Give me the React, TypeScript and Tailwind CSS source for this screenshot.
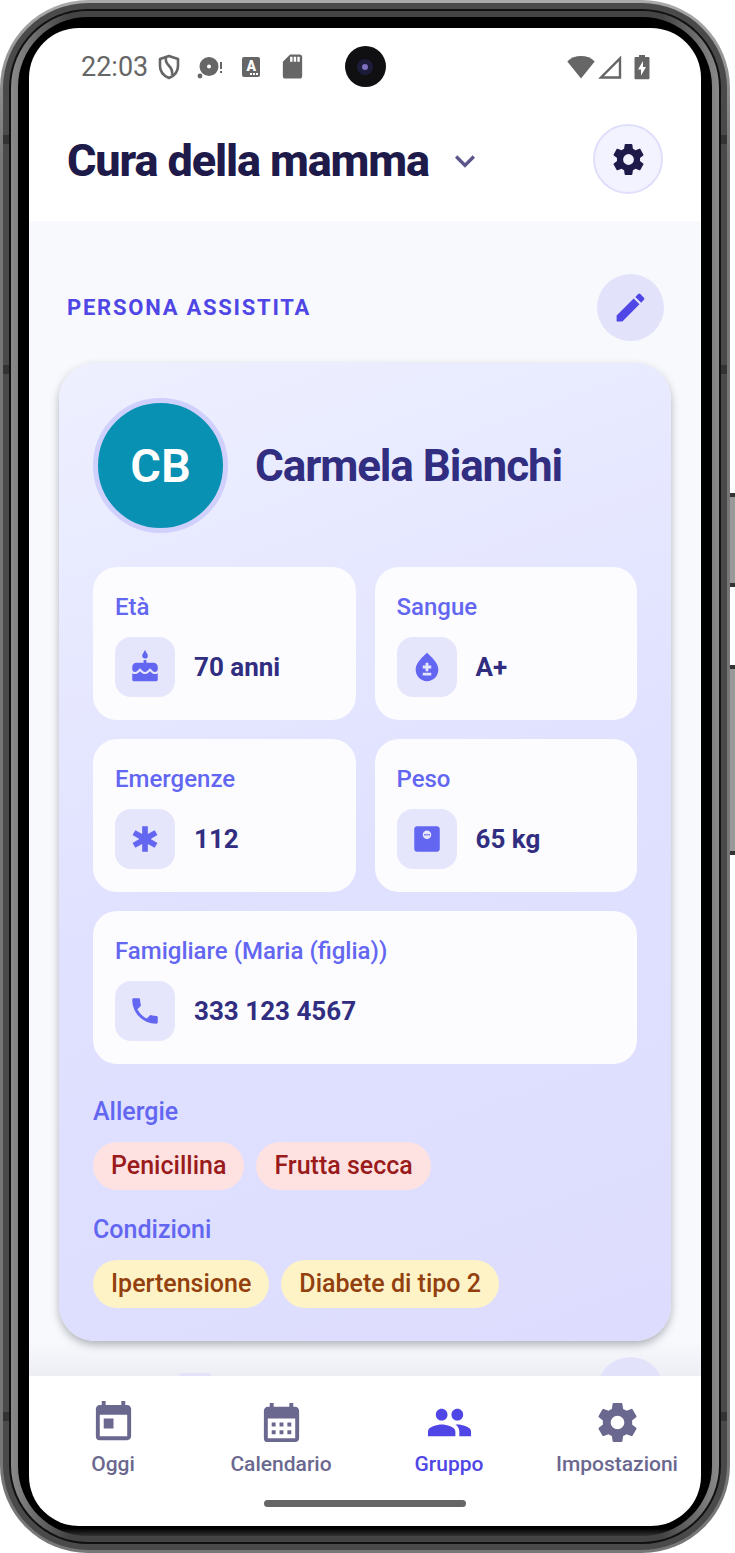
import type { ReactNode } from 'react'
import type { IconType } from 'react-icons'
import {
  MdBloodtype,
  MdCake,
  MdCalendarMonth,
  MdEdit,
  MdEmergency,
  MdKeyboardArrowDown,
  MdMonitorWeight,
  MdPeople,
  MdPhone,
  MdSdCard,
  MdToday,
} from 'react-icons/md'

type Fact = { label: string; value: string; icon: IconType; wide?: boolean }

const facts: Fact[] = [
  { label: 'Età', value: '70 anni', icon: MdCake },
  { label: 'Sangue', value: 'A+', icon: MdBloodtype },
  { label: 'Emergenze', value: '112', icon: MdEmergency },
  { label: 'Peso', value: '65 kg', icon: MdMonitorWeight },
  { label: 'Famigliare (Maria (figlia))', value: '333 123 4567', icon: MdPhone, wide: true },
]

function CogIcon({ className }: { className?: string }) {
  return (
    <svg className={className} viewBox="0 0 24 24" fill="currentColor" aria-hidden="true">
      <path d="M12 15.5A3.5 3.5 0 0 1 8.5 12 3.5 3.5 0 0 1 12 8.500 3.5 3.5 0 0 1 15.5 12 3.5 3.5 0 0 1 12 15.500M19.430 12.970C19.470 12.650 19.500 12.330 19.500 12S19.470 11.340 19.430 11L21.540 9.370C21.730 9.220 21.780 8.950 21.660 8.730L19.660 5.270C19.540 5.050 19.270 4.960 19.050 5.050L16.560 6.050C16.040 5.660 15.500 5.320 14.870 5.070L14.500 2.420C14.460 2.180 14.250 2 14 2H10C9.750 2 9.540 2.180 9.500 2.420L9.130 5.070C8.500 5.320 7.960 5.660 7.440 6.050L4.950 5.050C4.730 4.960 4.460 5.050 4.340 5.270L2.340 8.730C2.210 8.950 2.270 9.220 2.460 9.370L4.570 11C4.530 11.340 4.500 11.670 4.500 12S4.530 12.650 4.570 12.970L2.460 14.630C2.270 14.780 2.210 15.050 2.340 15.270L4.340 18.730C4.460 18.950 4.730 19.030 4.950 18.950L7.440 17.940C7.960 18.340 8.500 18.680 9.130 18.930L9.500 21.580C9.540 21.820 9.750 22 10 22H14C14.250 22 14.460 21.820 14.500 21.580L14.870 18.930C15.500 18.670 16.040 18.340 16.560 17.940L19.050 18.950C19.270 19.030 19.540 18.950 19.660 18.730L21.660 15.270C21.780 15.050 21.730 14.780 21.540 14.630Z" />
    </svg>
  )
}

const tabs = [
  { label: 'Oggi', icon: MdToday },
  { label: 'Calendario', icon: MdCalendarMonth },
  { label: 'Gruppo', icon: MdPeople, active: true },
  { label: 'Impostazioni', icon: CogIcon },
]

const allergies = ['Penicillina', 'Frutta secca']
const conditions = ['Ipertensione', 'Diabete di tipo 2']

function StatusBar() {
  return (
    <div className="relative flex h-20 items-center justify-between pr-[51px] pb-[3px] pl-[52px] text-[#666]">
      <div className="flex items-center">
        <span className="text-[27px] leading-8">22:03</span>
        <svg className="ml-2.5 h-[26px] w-[22px]" viewBox="0 0 22 26" fill="none" stroke="currentColor" strokeWidth="2.6" aria-hidden="true">
          <path d="M11 2 L20 5 V12 C20 18 16 22 11 24 C6 22 2 18 2 12 V5 Z" strokeLinejoin="round" />
          <path d="M8 4 C6 12 16 11 14 21" />
        </svg>
        <svg className="ml-[17px] h-[24px] w-[26px]" viewBox="0 0 26 24" fill="currentColor" aria-hidden="true">
          <path fillRule="evenodd" d="M12 2a9.500 9.500 0 1 0 0 19a9.500 9.500 0 1 0 0-19zM12 9.500a2 2 0 1 1 0 4a2 2 0 1 1 0-4z" />
          <circle cx="3" cy="21" r="2.400" />
          <path d="M23 7h2v7h-2zM23 16h2v2h-2z" />
        </svg>
        <span className="relative ml-[19px] flex h-5 w-[18px] justify-center rounded-xs bg-[#666] text-[14px] leading-[18px] font-black text-white">
          A
          <span className="absolute right-0.5 bottom-0.5 w-2 border-b-2 border-dotted border-white" />
        </span>
        <MdSdCard className="ml-[18px] size-[29px]" aria-hidden="true" />
      </div>

      <div className="absolute inset-x-0 top-[18px] flex justify-center">
        <div className="flex size-[41px] items-center justify-center rounded-full bg-[#101012]">
          <div className="flex size-4 items-center justify-center rounded-full bg-[#1c1b3a]">
            <div className="size-1.5 rounded-full bg-[#7f6fc0]" />
          </div>
        </div>
      </div>

      <div className="flex items-center" aria-hidden="true">
        <svg className="h-6 w-7" viewBox="0 0 28 24" fill="currentColor">
          <path d="M14 23.500 L0.300 6.500 C7 -0.800 21 -0.800 27.700 6.500 Z" />
        </svg>
        <svg className="ml-[3px] h-6 w-6" viewBox="0 0 24 24" fill="none" stroke="currentColor" strokeWidth="2.400">
          <path d="M3 22.500 H22 V3.500 Z" />
        </svg>
        <svg className="ml-3 h-[26px] w-4" viewBox="0 0 16 26" fill="currentColor">
          <path fillRule="evenodd" d="M5 1h6v2h3.500q1 0 1 1v20q0 1.200-1 1.200h-13q-1 0-1-1.200v-20q0-1 1-1H5zM9 7L4 15.500h3V21.500l5-8.500H9z" />
        </svg>
      </div>
    </div>
  )
}

function Header() {
  return (
    <header className="flex h-[113px] items-start justify-between px-[38px] pt-4">
      <button type="button" className="flex items-center gap-4 pt-[11px] text-[#1e1b4b]">
        <h1 className="text-[45px] leading-[52px] font-extrabold tracking-tight">Cura della mamma</h1>
        <MdKeyboardArrowDown className="size-10 text-[#5b568c]" aria-hidden="true" />
      </button>
      <button
        type="button"
        aria-label="Impostazioni del gruppo"
        className="flex size-[70px] items-center justify-center rounded-full border-2 border-[#e0dffb] bg-[#f3f3ff] text-[#1e1b4b]"
      >
        <CogIcon className="size-[37px]" />
      </button>
    </header>
  )
}

function FactTile({ label, value, icon: Icon, wide }: Fact) {
  return (
    <div className={`rounded-3xl bg-[#fcfcff] px-[22px] pt-6 pb-[23px] ${wide ? 'col-span-2' : ''}`}>
      <dt className="text-[24px] leading-8 font-medium text-[#6366f1]">{label}</dt>
      <dd className="mt-[14px] flex items-center gap-[19px] text-[26px] leading-8 font-bold text-[#312e81]">
        <span className="flex size-[60px] items-center justify-center rounded-2xl bg-[#e5e5fc] text-[#6366f1]">
          <Icon className="size-[34px]" aria-hidden="true" />
        </span>
        {value}
      </dd>
    </div>
  )
}

function ChipGroup({ title, children }: { title: string; children: ReactNode }) {
  return (
    <section>
      <h3 className="text-[25px] leading-8 font-medium text-[#6366f1]">{title}</h3>
      <ul className="mt-[14px] flex flex-wrap gap-3">{children}</ul>
    </section>
  )
}

function PersonCard() {
  return (
    <article className="mx-[30px] mt-[22px] rounded-[36px] bg-linear-160 from-[#eef0ff] via-[#e0e1ff] to-[#dddcfe] px-[34px] pt-[35px] pb-[33px] shadow-[0_4px_8px_rgba(40,50,60,0.35)]">
      <div className="flex items-center gap-[27px]">
        <div className="flex size-[135px] shrink-0 items-center justify-center rounded-full border-[5px] border-[#d0d0fc] bg-[#0891b2] text-[47px] leading-[52px] font-semibold text-white">
          CB
        </div>
        <h2 className="text-[44px] leading-[52px] font-bold tracking-tight text-[#312e81]">Carmela Bianchi</h2>
      </div>

      <dl className="mt-[34px] grid grid-cols-2 gap-[19px]">
        {facts.map(fact => (
          <FactTile key={fact.label} {...fact} />
        ))}
      </dl>

      <div className="mt-8 flex flex-col gap-6">
        <ChipGroup title="Allergie">
          {allergies.map(name => (
            <li key={name} className="rounded-full bg-[#fee2e2] px-[18px] py-2 text-[25px] leading-8 font-medium text-[#991b1b]">
              {name}
            </li>
          ))}
        </ChipGroup>
        <ChipGroup title="Condizioni">
          {conditions.map(name => (
            <li key={name} className="rounded-full bg-[#fef3c7] px-[18px] py-2 text-[25px] leading-8 font-medium text-[#92400e]">
              {name}
            </li>
          ))}
        </ChipGroup>
      </div>
    </article>
  )
}

function TabBar() {
  return (
    <nav className="grid h-[112px] grid-cols-4 pt-[23px]" aria-label="Sezioni">
      {tabs.map(({ label, icon: Icon, active }) => (
        <a
          key={label}
          href="#"
          aria-current={active ? 'page' : undefined}
          className={`flex flex-col items-center gap-1 ${active ? 'text-[#4f46e5]' : 'text-[#6b6890]'}`}
        >
          <Icon className="size-[47px]" aria-hidden="true" />
          <span className="text-[21px] leading-7 font-medium">{label}</span>
        </a>
      ))}
    </nav>
  )
}

function FrameDetails() {
  return (
    <div aria-hidden="true">
      {/* power and volume keys */}
      <div className="absolute top-[493px] -right-[5px] h-[94px] w-[5px] border-y-4 border-[#333] bg-[#999]" />
      <div className="absolute top-[665px] -right-[5px] h-[190px] w-[5px] border-y-4 border-[#333] bg-[#999]" />
      {/* antenna bands */}
      <div className="absolute top-[135px] left-[3px] h-[9px] w-1.5 bg-[#333]" />
      <div className="absolute top-[135px] right-[3px] h-[9px] w-1.5 bg-[#333]" />
      <div className="absolute top-[365px] left-[3px] h-[9px] w-1.5 bg-[#333]" />
      <div className="absolute top-[365px] right-[3px] h-[9px] w-1.5 bg-[#333]" />
      <div className="absolute bottom-[132px] left-[3px] h-[9px] w-1.5 bg-[#333]" />
      <div className="absolute right-[3px] bottom-[132px] h-[9px] w-1.5 bg-[#333]" />
    </div>
  )
}

export default function App() {
  return (
    <div className="min-h-screen bg-white pr-[5px] font-[Roboto,sans-serif]">
      <div className="relative rounded-[88px] bg-linear-to-b from-[#aaa] via-[#777] via-10% to-[#777] p-[3px]">
        <div className="rounded-[85px] bg-[#4a4a4a] p-1.5">
          <div className="rounded-[79px] bg-[#111] p-0.5">
            <div className="rounded-[77px] bg-[linear-gradient(to_right,#8a8a8a,#444_8%,#444_92%,#8a8a8a)] px-[7px] py-1.5">
              <div className="rounded-[70px] bg-[linear-gradient(#000_99.5%,#333)] px-[11px] pt-[11px] pb-[10px]">
                <div className="overflow-hidden rounded-[50px] bg-white">
                  <StatusBar />
                  <Header />
                  <main className="bg-[#f8f9fd]">
                    <div className="flex items-center justify-between pt-[53px] pr-[37px] pl-[38px]">
                      <h2 className="text-[22px] leading-7 font-bold tracking-[0.08em] text-[#4f46e5] uppercase">
                        Persona assistita
                      </h2>
                      <button
                        type="button"
                        aria-label="Modifica persona assistita"
                        className="flex size-[67px] items-center justify-center rounded-full bg-[#e3e2fb] text-[#4f46e5]"
                      >
                        <MdEdit className="size-[37px]" />
                      </button>
                    </div>
                    <PersonCard />
                    {/* next section, cut off by the tab bar */}
                    <div className="flex h-[35px] items-end justify-between overflow-hidden bg-linear-to-b from-transparent to-[#1e1e3c]/5 pt-4 pr-[37px] pl-[150px]">
                      <div className="h-[3px] w-8 rounded-t-full bg-[#e3e2fb]" />
                      <div className="size-[67px] self-start rounded-full bg-[#e3e2fb]" />
                    </div>
                  </main>
                  <TabBar />
                  <div className="flex h-[38px] justify-center pt-3">
                    <div className="h-[7px] w-[202px] rounded-full bg-[#666]" />
                  </div>
                </div>
              </div>
            </div>
          </div>
        </div>
        <FrameDetails />
      </div>
    </div>
  )
}
